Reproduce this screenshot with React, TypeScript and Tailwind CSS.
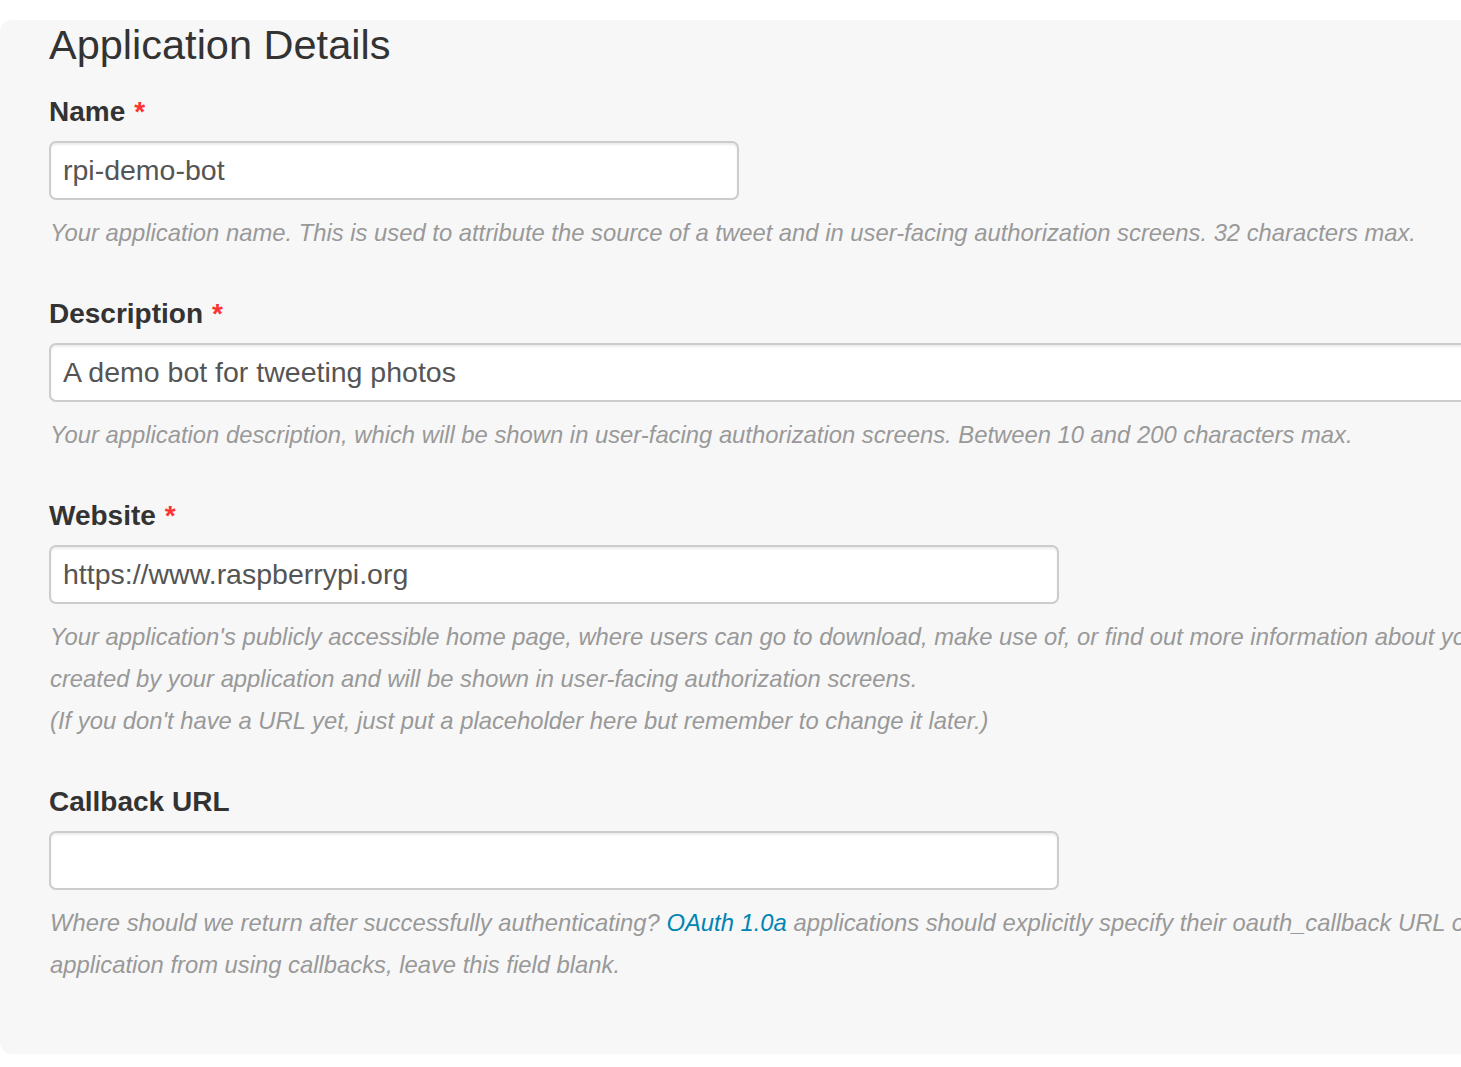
import React from "react"

type Field = {
  id: string
  label: string
  required: boolean
  value: string
  width: string
  help: React.ReactNode[]
}

const fields: Field[] = [
  {
    id: "name",
    label: "Name",
    required: true,
    value: "rpi-demo-bot",
    width: "w-[690px]",
    help: [
      "Your application name. This is used to attribute the source of a tweet and in user-facing authorization screens. 32 characters max.",
    ],
  },
  {
    id: "description",
    label: "Description",
    required: true,
    value: "A demo bot for tweeting photos",
    width: "w-[1500px]",
    help: [
      "Your application description, which will be shown in user-facing authorization screens. Between 10 and 200 characters max.",
    ],
  },
  {
    id: "website",
    label: "Website",
    required: true,
    value: "https://www.raspberrypi.org",
    width: "w-[1010px]",
    help: [
      "Your application's publicly accessible home page, where users can go to download, make use of, or find out more information about your application. This fully-qualified URL is used in the source attribution for tweets",
      "created by your application and will be shown in user-facing authorization screens.",
      "(If you don't have a URL yet, just put a placeholder here but remember to change it later.)",
    ],
  },
  {
    id: "callback",
    label: "Callback URL",
    required: false,
    value: "",
    width: "w-[1010px]",
    help: [
      <>
        Where should we return after successfully authenticating?{" "}
        <a href="#" className="text-[#0084b4]">
          OAuth 1.0a
        </a>{" "}
        applications should explicitly specify their oauth_callback URL on the request token step, regardless of the value given here. To restrict your
      </>,
      "application from using callbacks, leave this field blank.",
    ],
  },
]

export default function App() {
  return (
    <div className="h-[1067px] w-full overflow-hidden bg-white pt-[20px] font-['Liberation_Sans',Arial,sans-serif]">
      <div className="w-[1600px] rounded-[12px] bg-[#f7f7f7] pb-[68px] pl-[49px]">
        <h3 className="m-0 pt-[2px] text-[41.5px] leading-[45px] font-normal text-[#333]">Application Details</h3>

        <div className="mt-[24px]">
          {fields.map((f) => (
            <div key={f.id} className="mb-[39px] last:mb-0">
              <label htmlFor={f.id} className="mb-[10px] block pt-[1px] text-[28px] leading-[39px] font-bold text-[#333]">
                {f.label}
                {f.required && <span className="ml-[9px] text-[#f33]">*</span>}
              </label>
              <input
                id={f.id}
                type="text"
                defaultValue={f.value}
                className={`${f.width} block h-[59px] rounded-[7px] border-2 border-[#ccc] bg-white px-[12px] text-[28.5px] text-[#555] shadow-[inset_0_2px_2px_rgba(0,0,0,0.075)] outline-none`}
              />
              <div className="mt-[12px] pl-[1px] text-[23.8px] leading-[42px] whitespace-nowrap text-[#999] italic">
                {f.help.map((line, i) => (
                  <p key={i}>{line}</p>
                ))}
              </div>
            </div>
          ))}
        </div>
      </div>
    </div>
  )
}
